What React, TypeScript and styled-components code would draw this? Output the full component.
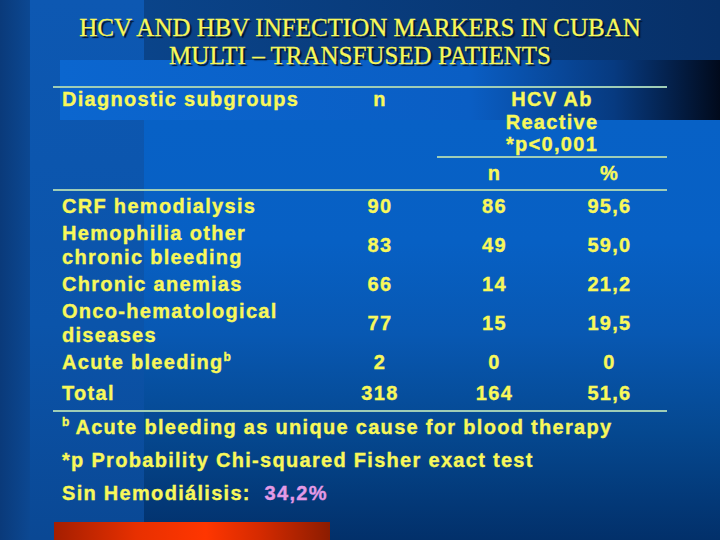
import React from "react";
import styled, { createGlobalStyle } from "styled-components";

const GlobalStyle = createGlobalStyle`
  html, body { margin: 0; padding: 0; background: #02306a; }
  #root { width: 720px; height: 540px; }
`;

const LINE = "#9fcdb6";
const YELLOW = "#f8f85a";

const Slide = styled.div`
  width: 720px;
  height: 540px;
  overflow: hidden;
  display: flex;
  flex-direction: column;
  font-family: "Liberation Sans", Arial, sans-serif;
  color: ${YELLOW};
  background:
    linear-gradient(90deg, #0b66cf 0%, #0a5ec4 62%, #073a80 84%, #010a1c 100%) 60px 60px / 660px 60px no-repeat,
    linear-gradient(180deg, #0d58b2 0%, #0b54aa 60%, #0a4894 100%) 30px 0 / 114px 100% no-repeat,
    linear-gradient(90deg, #0a3a7a 0%, #0c4892 100%) 0 0 / 30px 100% no-repeat,
    linear-gradient(90deg, #0a448a 0%, #073068 100%) 144px 0 / 576px 60px no-repeat,
    linear-gradient(180deg, #0762c8 0%, #0760c4 45%, #0858b2 62%, #054890 80%, #02306a 100%);
`;

const Title = styled.h1`
  margin: 14px 0 0;
  font-family: "Liberation Serif", "Times New Roman", serif;
  font-weight: normal;
  font-size: 25px;
  line-height: 28px;
  text-align: center;
  color: ${YELLOW};
  -webkit-text-stroke: 0.3px ${YELLOW};
  text-shadow: 2px 2px 1px #00122e;
`;

const Table = styled.div`
  margin: 16px 0 0 53px;
  width: 614px;
  border-top: 2px solid ${LINE};
  font-weight: bold;
  font-size: 20px;
  letter-spacing: 1.3px;
  -webkit-text-stroke: 0.35px ${YELLOW};
`;

const cols = "270px 114px 115px 115px";

const Header = styled.div`
  display: grid;
  grid-template-columns: ${cols};
  border-bottom: 2px solid ${LINE};
  line-height: 22.5px;
`;

const HeadLabel = styled.div`
  grid-column: 1;
  grid-row: 1 / span 2;
  padding-left: 9px;
`;

const HeadN = styled.div`
  grid-column: 2;
  grid-row: 1;
  text-align: center;
`;

const HcvGroup = styled.div`
  grid-column: 3 / span 2;
  grid-row: 1;
  text-align: center;
  border-bottom: 2px solid ${LINE};
`;

const SubHead = styled.div<{ $col: number }>`
  grid-column: ${(p) => p.$col};
  grid-row: 2;
  text-align: center;
  line-height: 24px;
  padding: 3px 0 4px;
`;

const Body = styled.div`
  display: flex;
  flex-direction: column;
  gap: 3px;
  padding: 3px 0 5px;
  border-bottom: 2px solid ${LINE};
`;

const Row = styled.div<{ $total?: boolean }>`
  display: grid;
  grid-template-columns: ${cols};
  align-items: center;
  line-height: 24px;
  margin-top: ${(p) => (p.$total ? "4px" : "0")};
`;

const Label = styled.div`
  padding-left: 9px;
`;

const Num = styled.div`
  text-align: center;
`;

const Sup = styled.sup`
  font-size: 12px;
  line-height: 0;
  vertical-align: 8px;
  letter-spacing: 0;
`;

const Notes = styled.div`
  display: flex;
  flex-direction: column;
  gap: 9px;
  padding: 3px 0 0 9px;
  line-height: 24px;
`;

const Note = styled.div``;

const Pink = styled.span`
  color: #e49ae6;
  -webkit-text-stroke: 0.35px #e49ae6;
`;

const RedBar = styled.div`
  margin: auto 0 0 54px;
  width: 276px;
  height: 18px;
  flex-shrink: 0;
  background: linear-gradient(90deg, #a41e00 0%, #e83000 30%, #ff3600 55%, #d42a00 75%, #8c1c00 100%);
`;

type RowData = { label: React.ReactNode; n: string; hn: string; pct: string; total?: boolean };

const rows: RowData[] = [
  { label: "CRF hemodialysis", n: "90", hn: "86", pct: "95,6" },
  { label: <>Hemophilia other<br />chronic bleeding</>, n: "83", hn: "49", pct: "59,0" },
  { label: "Chronic anemias", n: "66", hn: "14", pct: "21,2" },
  { label: <>Onco-hematological<br />diseases</>, n: "77", hn: "15", pct: "19,5" },
  { label: <>Acute bleeding<Sup>b</Sup></>, n: "2", hn: "0", pct: "0" },
  { label: "Total", n: "318", hn: "164", pct: "51,6", total: true },
];

export default function App() {
  return (
    <>
      <GlobalStyle />
      <Slide>
        <Title>
          HCV AND HBV INFECTION MARKERS IN CUBAN
          <br />
          MULTI – TRANSFUSED PATIENTS
        </Title>
        <Table>
          <Header>
            <HeadLabel>Diagnostic subgroups</HeadLabel>
            <HeadN>n</HeadN>
            <HcvGroup>
              HCV Ab
              <br />
              Reactive
              <br />
              *p&lt;0,001
            </HcvGroup>
            <SubHead $col={3}>n</SubHead>
            <SubHead $col={4}>%</SubHead>
          </Header>
          <Body>
            {rows.map((r, i) => (
              <Row key={i} $total={r.total}>
                <Label>{r.label}</Label>
                <Num>{r.n}</Num>
                <Num>{r.hn}</Num>
                <Num>{r.pct}</Num>
              </Row>
            ))}
          </Body>
          <Notes>
            <Note>
              <Sup>b</Sup> Acute bleeding as unique cause for blood therapy
            </Note>
            <Note>*p Probability Chi-squared Fisher exact test</Note>
            <Note>
              Sin Hemodiálisis:&nbsp; <Pink>34,2%</Pink>
            </Note>
          </Notes>
        </Table>
        <RedBar />
      </Slide>
    </>
  );
}
